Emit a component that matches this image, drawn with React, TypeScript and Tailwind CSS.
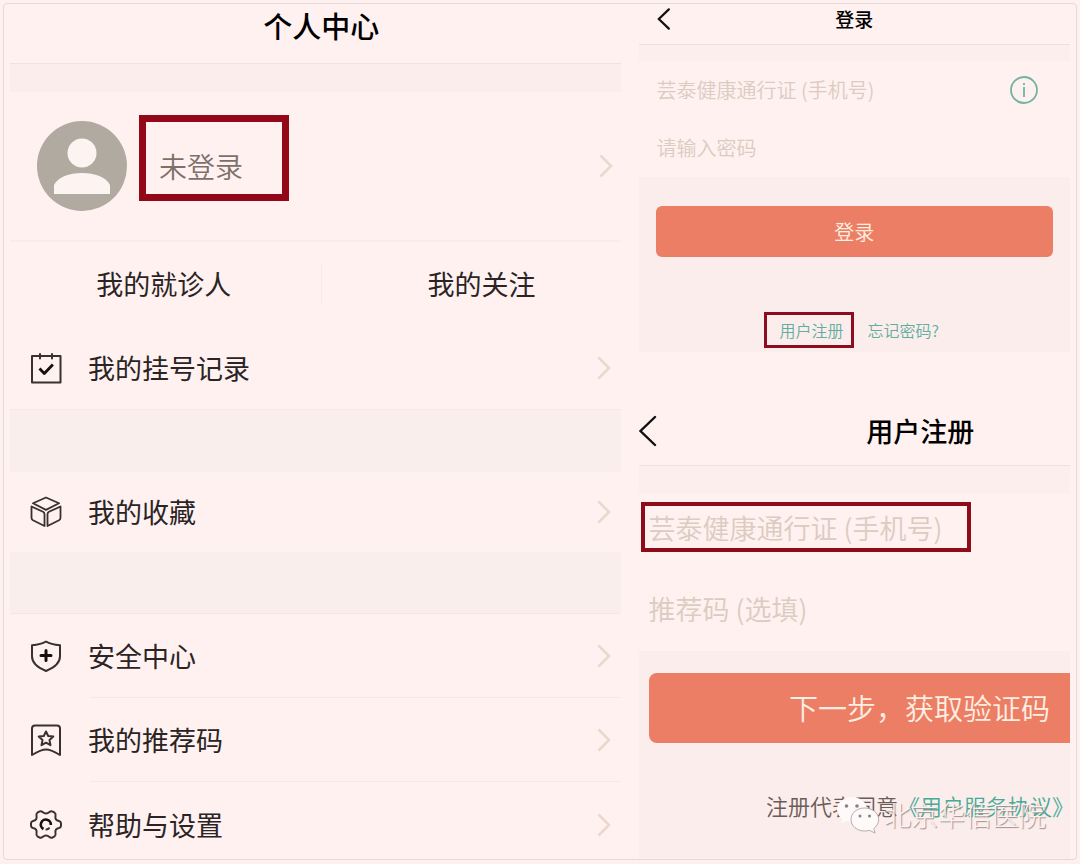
import type { ReactNode } from 'react'

type Row = { label: string; icon: ReactNode }

const iconProps = {
  viewBox: '0 0 32 32',
  className: 'w-8 h-8 shrink-0',
  fill: 'none',
  stroke: '#3a302f',
  strokeWidth: 2,
  strokeLinecap: 'round' as const,
  strokeLinejoin: 'round' as const,
}

const records: Row = {
  label: '我的挂号记录',
  icon: (
    <svg {...iconProps}>
      <path d="M2 4h28.500v26.500H2z" />
      <path d="M10 2v4.500M22 2v4.500" />
      <path d="M9.500 16.500l4.800 5 8.600-9" stroke="#161010" strokeWidth="2.800" strokeLinecap="butt" />
    </svg>
  ),
}

const favorites: Row = {
  label: '我的收藏',
  icon: (
    <svg {...iconProps} strokeWidth={1.8}>
      <path d="M16 1.500l13 5.800-13 6.600L3 7.300z" />
      <path d="M1.500 10.500l11.500 5.300q1.500.8 1.500 2.500V30L3 24.300q-1.500-.8-1.500-2.500z" />
      <path d="M30.500 10.500L19 15.800q-1.500.8-1.500 2.500V30L29 24.300q1.500-.8 1.500-2.500z" />
    </svg>
  ),
}

const settings: Row[] = [
  {
    label: '安全中心',
    icon: (
      <svg {...iconProps}>
        <path d="M16 1.500c4 2.500 8.500 3.300 14 3.800v11c0 7.500-6 11.500-14 14.700C8 27.800 2 23.800 2 16.300v-11C7.500 4.800 12 4 16 1.500z" />
        <path d="M16 10.500v10M11 15.500h10" stroke="#161010" strokeWidth="3" />
      </svg>
    ),
  },
  {
    label: '我的推荐码',
    icon: (
      <svg {...iconProps}>
        <path d="M5 1.500h22q3 0 3 3V31q-9-5.500-14-5.500T2 31V4.500q0-3 3-3z" />
        <path d="M16 7.500l2.200 4.500 5.100.6-3.800 3.500 1 5.100-4.500-2.500-4.500 2.500 1-5.100-3.800-3.500 5.100-.6z" />
      </svg>
    ),
  },
  {
    label: '帮助与设置',
    icon: (
      <svg {...iconProps}>
        <path d="M12.500 3Q16 6 19.500 3q1.500-1.300 3.300-.3l1.800 1q1.400 1 .9 3-.9 4.600 3.500 5.300 2 .5 2 2.200v2.600q0 1.700-2 2.200-4.400.7-3.500 5.300.5 2-.9 3l-1.800 1q-1.800 1-3.300-.3-3.500-3-7 0-1.500 1.300-3.300.3l-1.800-1q-1.400-1-.9-3Q7.400 19.700 3 19q-2-.5-2-2.200v-2.600Q1 12.500 3 12q4.400-.7 3.500-5.300-.5-2 .9-3l1.800-1q1.800-1 3.300.3z" />
        <path d="M13.500 20a5 5 0 1 1 7.300-4" stroke="#161010" strokeWidth="2.600" strokeLinecap="butt" />
        <path d="M16.500 20.500q1.500-.2 2.500-1.200" strokeWidth="2" />
      </svg>
    ),
  },
]

function ChevronRight() {
  return (
    <svg viewBox="0 0 14 24" className="w-3.5 h-6 shrink-0" fill="none" stroke="#ead8cd" strokeWidth="2.500">
      <path d="M1.500 1.500L12 12 1.500 22.500" />
    </svg>
  )
}

function BackButton({ large = false }: { large?: boolean }) {
  return (
    <button type="button" aria-label="返回" className="cursor-pointer">
      <svg
        viewBox="0 0 18 32"
        className={large ? 'w-[18px] h-8' : 'w-3.5 h-[22px]'}
        fill="none"
        stroke="#111"
        strokeWidth={large ? 2.4 : 3.2}
        strokeLinecap="round"
      >
        <path d="M16 2L1.500 16 16 30" />
      </svg>
    </button>
  )
}

function MenuRow({ row }: { row: Row }) {
  return (
    <a href="#" className="flex flex-1 items-center pr-2.5">
      <span className="flex w-[58px]">{row.icon}</span>
      <span className="flex-1">{row.label}</span>
      <ChevronRight />
    </a>
  )
}

function Profile() {
  return (
    <section className="text-[27px] leading-10 text-[#2b2424]">
      <h1 className="h-[60px] pl-3 border-b border-[#f1e0de] text-center text-[29px] leading-[42px] font-medium text-black">
        个人中心
      </h1>
      <div className="h-7 bg-[#fbedec]" />
      <a href="#" className="flex items-center h-[150px] pl-[27px] pr-2 border-b-2 border-[#fbebea]">
        <svg viewBox="0 0 90 90" className="w-[90px] h-[90px] shrink-0">
          <circle cx="45" cy="45" r="45" fill="#b1aaa0" />
          <circle cx="45" cy="32" r="14.500" fill="#fdf3f1" />
          <path d="M17 73v-9c4-8 15-12 28-12s24 4 28 12v9z" fill="#fdf3f1" />
        </svg>
        <span className="flex w-[150px] h-[86px] ml-3 mb-4 pt-4 pl-[13px] items-center border-[7px] border-[#930818] text-[28px] font-[350] text-[#7d706b]">
          未登录
        </span>
        <span className="flex ml-auto">
          <ChevronRight />
        </span>
      </a>
      <nav className="grid grid-cols-[312fr_298fr] items-center h-[84px] text-center">
        <a href="#" className="pr-1 border-r border-[#fbe9e8]">
          我的就诊人
        </a>
        <a href="#" className="pl-5">
          我的关注
        </a>
      </nav>
      <div className="flex h-[84px] pl-5 border-b border-[#f6e7e5]">
        <MenuRow row={records} />
      </div>
      <div className="h-[62px] bg-[#faeeed]" />
      <div className="flex h-20 pl-5">
        <MenuRow row={favorites} />
      </div>
      <div className="h-[62px] bg-[#faeeed] border-b border-[#f6e7e5]" />
      <ul>
        {settings.map((row, i) => (
          <li key={row.label}>
            {i > 0 && <hr className="ml-20 border-[#f8e7e5]" />}
            <div className={i < 2 ? 'flex h-[83px] pl-5' : 'flex h-[77px] pt-2 pl-5'}>
              <MenuRow row={row} />
            </div>
          </li>
        ))}
      </ul>
    </section>
  )
}

function Login() {
  return (
    <section>
      <header className="grid grid-cols-[48px_1fr_48px] items-center h-[41px] pb-2.5 px-[18px] border-b border-[#eedfdd]">
        <BackButton />
        <h2 className="text-center text-[19px] leading-7 font-medium text-black">登录</h2>
      </header>
      <form onSubmit={(e) => e.preventDefault()}>
        <div className="h-4 bg-[#fbeeed]" />
        <div className="flex items-center h-[58px] pl-[18px] pr-8">
          <input
            type="tel"
            aria-label="芸泰健康通行证 (手机号)"
            placeholder="芸泰健康通行证 (手机号)"
            className="flex-1 min-w-0 h-10 pb-0.5 text-xl font-[350] outline-none placeholder:text-[#dccbc1]"
          />
          <button type="button" aria-label="说明" className="cursor-pointer">
            <svg viewBox="0 0 28 28" className="w-7 h-7" fill="none" stroke="#6fb3a5" strokeWidth="1.800">
              <circle cx="14" cy="14" r="13" />
              <path d="M14 11v10M14 7v2" />
            </svg>
          </button>
        </div>
        <div className="flex items-center h-[58px] pl-[18px] pr-8">
          <input
            type="password"
            aria-label="请输入密码"
            placeholder="请输入密码"
            className="flex-1 min-w-0 h-10 pb-0.5 text-xl font-[350] outline-none placeholder:text-[#dccbc1]"
          />
        </div>
        <div className="h-[175px] px-[17px] pt-[29px] bg-[#fbedec]">
          <button type="submit" className="block w-full h-[51px] rounded-md bg-[#eb7e64] text-xl font-[350] text-[#ffeee2]">
            登录
          </button>
          <div className="flex items-center justify-center mt-[55px] pr-1.5 gap-3.5 text-base font-[350] text-[#5fae9f]">
            <a href="#" className="flex items-center h-9 pl-[13px] pr-[7px] border-[3px] border-[#8e0c1f]">
              用户注册
            </a>
            <a href="#">忘记密码?</a>
          </div>
        </div>
      </form>
    </section>
  )
}

function Watermark() {
  return (
    <div className="absolute right-6 top-2.5 flex items-center gap-1 pointer-events-none">
      <svg viewBox="0 0 44 40" className="w-11 h-10" fill="#fffafa" stroke="#a79b99" strokeWidth=".8">
        <path
          d="M16 2C7.500 2 1 7.700 1 14.500c0 4 2.200 7.400 5.500 9.700L5 29l5.500-3c1.800.5 3.600.8 5.500.8 8.500 0 15-5.500 15-12.300S24.500 2 16 2z"
          stroke="none"
        />
        <path d="M28.500 13C21 13 15 18 15 24.500S21 36 28.500 36c1.700 0 3.300-.3 4.800-.7L39 38l-1.300-4.500c3-2.100 5-5.300 5-9C42.700 18 36 13 28.500 13z" />
        <g fill="#8d807e" stroke="none">
          <circle cx="10.500" cy="11" r="1.800" />
          <circle cx="21" cy="11" r="1.800" />
          <circle cx="24" cy="21" r="1.500" />
          <circle cx="33.500" cy="21" r="1.500" />
        </g>
      </svg>
      <span className="text-[27px] leading-10 font-light whitespace-nowrap text-[#fdf1f0] [text-shadow:1px_1px_1px_#9b8d8b]">
        北京华信医院
      </span>
    </div>
  )
}

function Register() {
  return (
    <section className="flex flex-1 flex-col">
      <header className="flex items-center h-[114px] pt-11 border-b border-[#f0dfde]">
        <BackButton large />
        <h2 className="flex-1 pl-[114px] text-center text-[27px] leading-10 font-medium text-black">用户注册</h2>
      </header>
      <form className="flex flex-1 flex-col" onSubmit={(e) => e.preventDefault()}>
        <div className="h-7 bg-[#fbeeed]" />
        <div className="pt-2 px-0.5">
          <input
            type="tel"
            aria-label="注册手机号"
            placeholder="芸泰健康通行证 (手机号)"
            className="block w-[330px] h-[50px] pl-1 border-4 border-[#8e0c1a] text-[27px] font-[350] outline-none placeholder:text-[#dccbc1]"
          />
        </div>
        <div className="pt-[31px] pb-[18px] px-2.5">
          <input
            type="text"
            aria-label="推荐码 (选填)"
            placeholder="推荐码 (选填)"
            className="block w-full h-[50px] text-[27px] font-[350] outline-none placeholder:text-[#dccbc1]"
          />
        </div>
        <div className="flex-1 pt-[22px] pl-2.5 bg-[#fbedec]">
          <button
            type="submit"
            className="block w-full h-[70px] pr-5 rounded-l-lg bg-[#eb7e64] text-right text-[29px] font-[350] text-[#ffeee2]"
          >
            下一步，获取验证码
          </button>
          <div className="relative flex justify-end mt-[42px] pb-2">
            <p className="-mr-1 text-[22px] leading-10 font-[350] whitespace-nowrap text-[#6b5c59]">
              注册代表同意
              <a href="#" className="text-[#45ab98]">
                《用户服务协议》
              </a>
            </p>
            <Watermark />
          </div>
        </div>
      </form>
    </section>
  )
}

export default function App() {
  return (
    <div className="min-h-screen p-[3px] bg-[#fdf1ef] font-['Noto_Sans_CJK_SC','Noto_Sans',sans-serif]">
      <main className="grid grid-cols-[610fr_431fr] gap-[18px] px-1.5 border border-[#e8d8d7] rounded-sm bg-[#fef1f0]">
        <Profile />
        <div className="flex flex-col">
          <Login />
          <Register />
        </div>
      </main>
    </div>
  )
}
